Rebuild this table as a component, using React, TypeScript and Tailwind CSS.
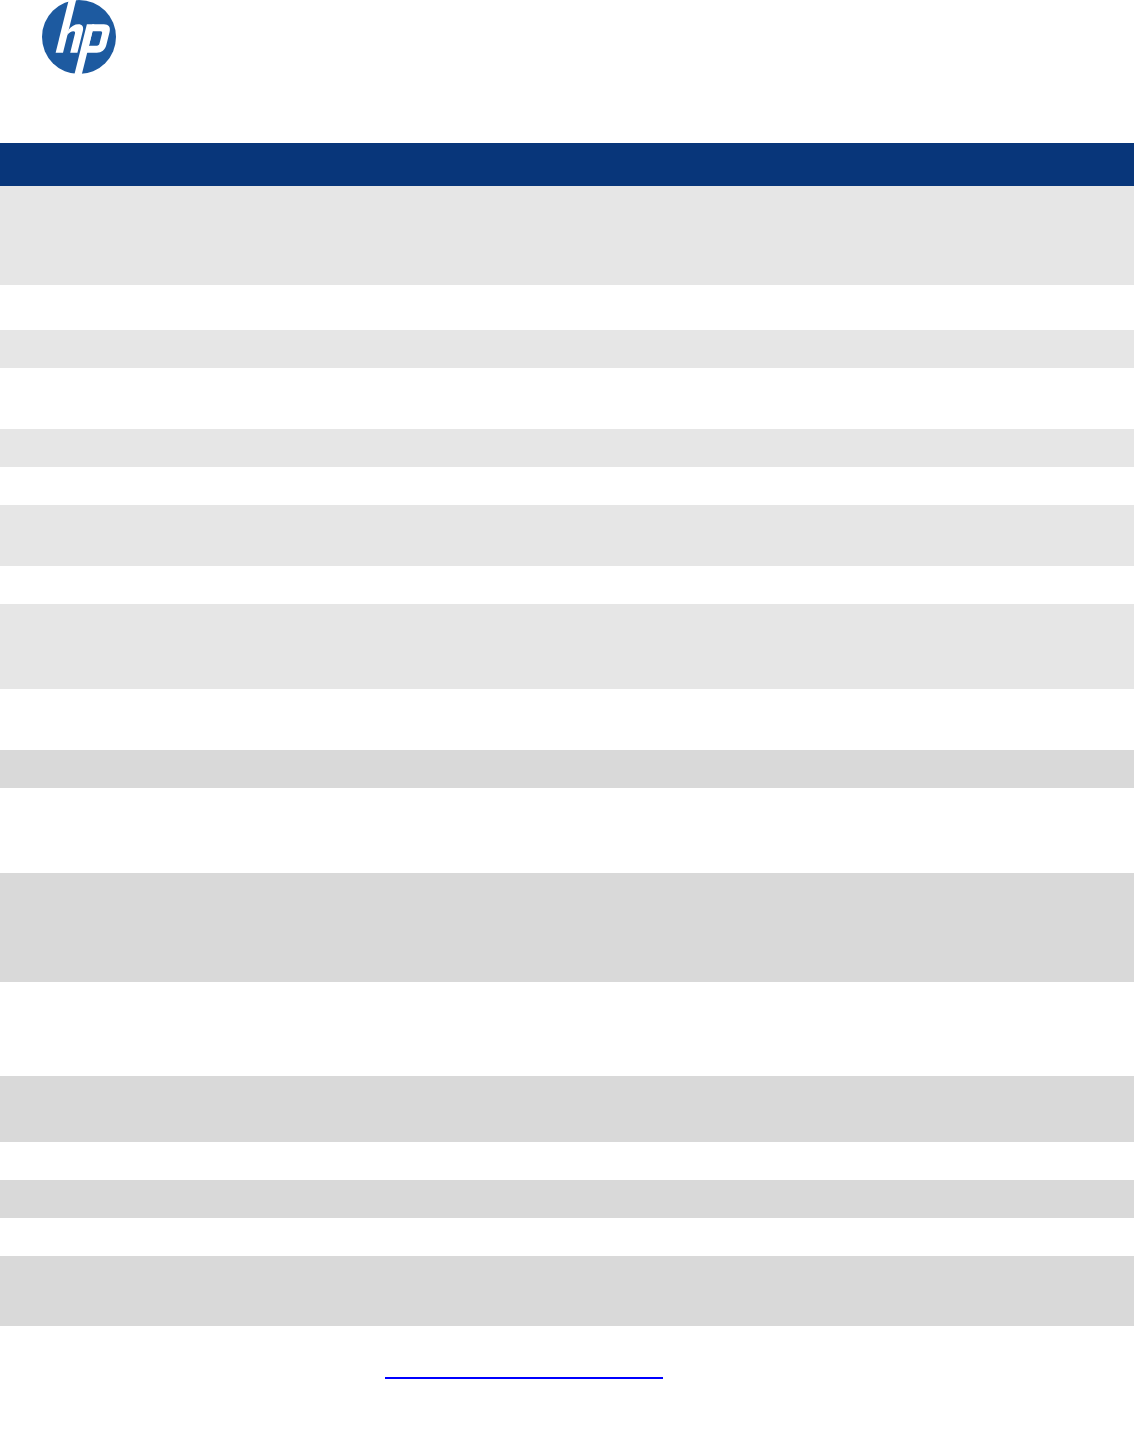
import React from "react";

type Row = { h: string; bg: string };

// band heights read off the reference, top to bottom
const rows: Row[] = [
  { h: "h-[99px]", bg: "bg-[#e6e6e6]" },
  { h: "h-[45px]", bg: "bg-white" },
  { h: "h-[38px]", bg: "bg-[#e6e6e6]" },
  { h: "h-[61px]", bg: "bg-white" },
  { h: "h-[38px]", bg: "bg-[#e6e6e6]" },
  { h: "h-[38px]", bg: "bg-white" },
  { h: "h-[61px]", bg: "bg-[#e6e6e6]" },
  { h: "h-[38px]", bg: "bg-white" },
  { h: "h-[85px]", bg: "bg-[#e6e6e6]" },
  { h: "h-[61px]", bg: "bg-white" },
  { h: "h-[38px]", bg: "bg-[#d9d9d9]" },
  { h: "h-[85px]", bg: "bg-white" },
  { h: "h-[109px]", bg: "bg-[#d9d9d9]" },
  { h: "h-[94px]", bg: "bg-white" },
  { h: "h-[66px]", bg: "bg-[#d9d9d9]" },
  { h: "h-[38px]", bg: "bg-white" },
  { h: "h-[38px]", bg: "bg-[#d9d9d9]" },
  { h: "h-[38px]", bg: "bg-white" },
  { h: "h-[70px]", bg: "bg-[#d9d9d9]" },
];

const HpLogo = () => (
  <svg width="74" height="74" viewBox="42 -1 74 74" className="block">
    <defs>
      <clipPath id="hp-circle">
        <circle cx="79" cy="36" r="37" />
      </clipPath>
    </defs>
    <circle cx="79" cy="36" r="37" fill="#1d5aa0" />
    <g fill="#ffffff" transform="translate(0 36.5) skewX(-14) translate(0 -36.5)">
      {/* h */}
      <rect x="59.4" y="-6" width="7.4" height="57.7" />
      <path d="M66.5 29 C68.5 25.2 71.5 23.3 75 23.3 C79 23.3 81.2 25.8 81.2 30 L81.2 51.7 L74 51.7 L74 32.6 C74 31.1 73.2 30.3 71.8 30.3 C69.8 30.3 67.9 31.6 66.5 34.2 Z" />
      {/* p */}
      <rect x="83.6" y="23.3" width="7.4" height="60" />
      <path
        fillRule="evenodd"
        d="M89 23.3 L100.6 23.3 C105.4 23.3 108.2 26.1 108.2 31 L108.2 44 C108.2 48.9 105.4 51.7 100.6 51.7 L89 51.7 Z M91 30.3 L99 30.3 C100.4 30.3 101 31 101 32.4 L101 42.6 C101 44 100.4 44.7 99 44.7 L91 44.7 Z"
      />
    </g>
  </svg>
);

export default function App() {
  return (
    <div className="w-[1134px] h-[1449px] bg-white font-['Liberation_Sans',Arial,sans-serif]">
      <div className="h-[143px] pl-[42px]">
        <HpLogo />
      </div>
      <div className="h-[43px] bg-[#08367a]" />
      {rows.map((r, i) => (
        <div key={i} className={`${r.h} ${r.bg}`} />
      ))}
      <div className="pt-[51px] pl-[385px]">
        <a href="#" className="block w-[278px] h-[2px] bg-[#0000ff]" />
      </div>
    </div>
  );
}
